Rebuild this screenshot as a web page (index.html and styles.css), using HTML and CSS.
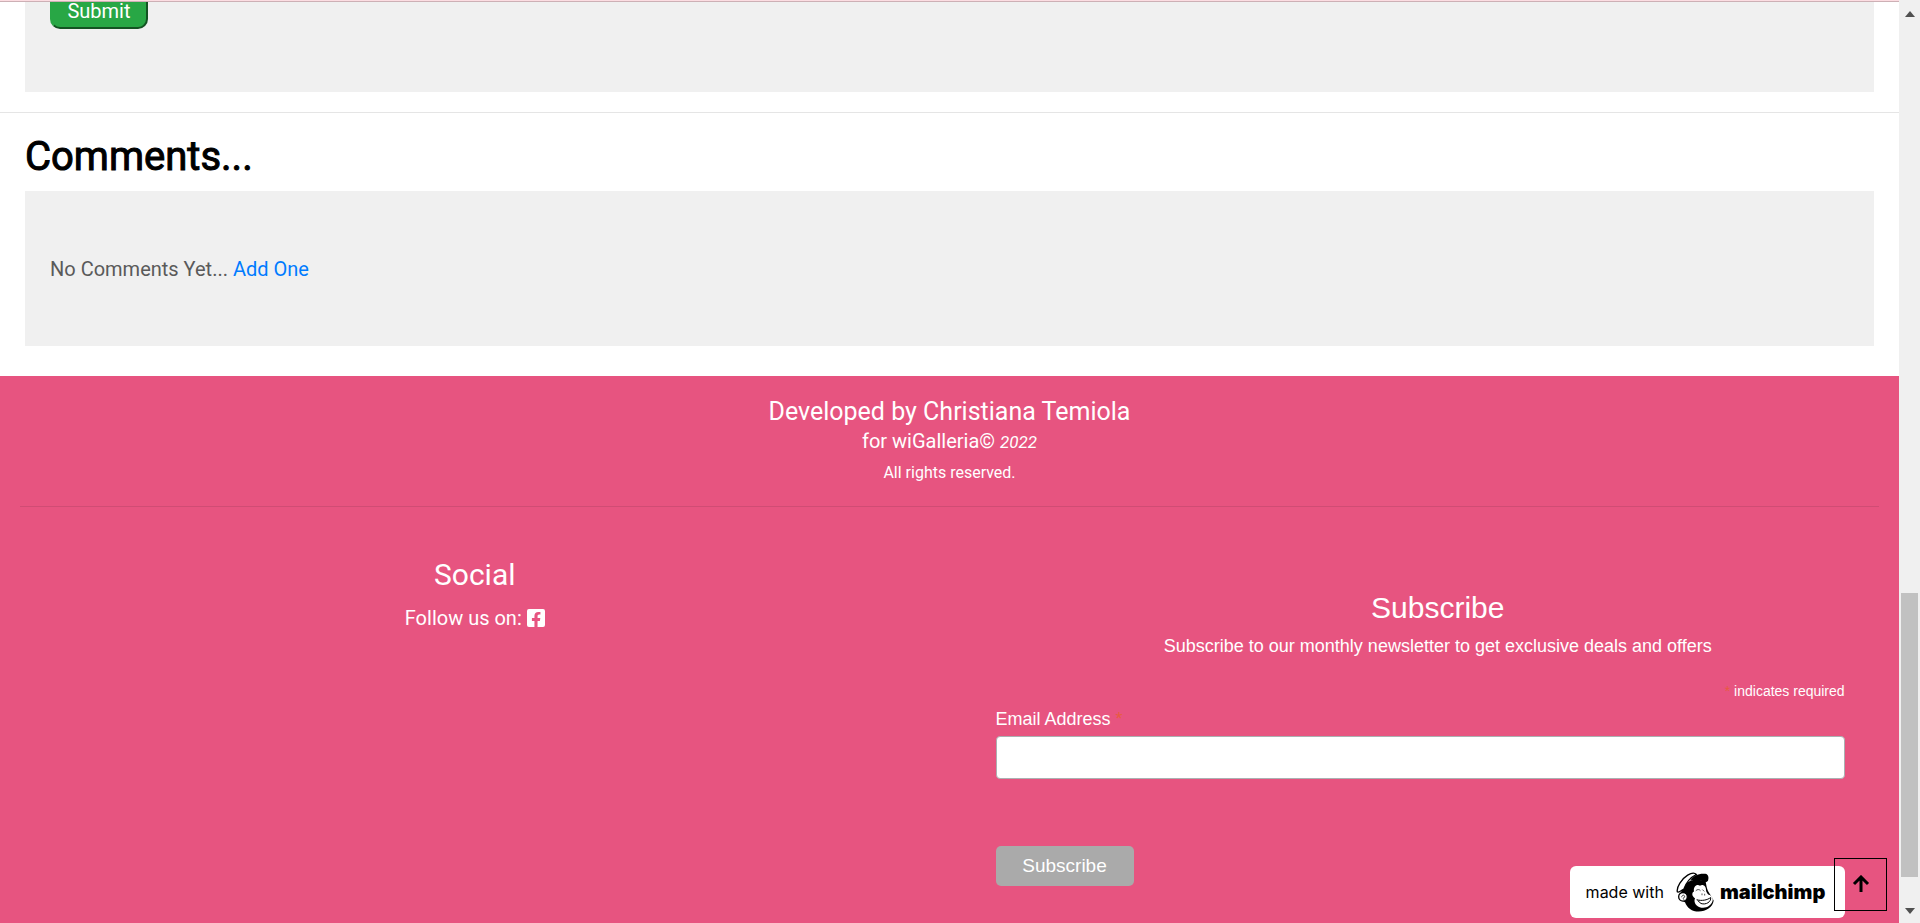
FILE: index.html
```html
<!DOCTYPE html>
<html lang="en">
<head>
<meta charset="utf-8">
<title>wiGalleria</title>
<link rel="stylesheet" href="styles.css">
</head>
<body>
<div class="page">
  <header class="topbar"></header>
  <main>
    <section class="panel panel-form">
      <button class="submit" type="submit">Submit</button>
    </section>
    <hr class="divider">
    <h1 class="title">Comments...</h1>
    <section class="panel panel-comments">
      <p>No Comments Yet... <a href="#add">Add One</a></p>
    </section>
  </main>
  <footer class="footer">
    <div class="credits">
      <p class="developer">Developed by Christiana Temiola</p>
      <p class="product">for wiGalleria© <em>2022</em></p>
      <p class="rights">All rights reserved.</p>
    </div>
    <hr class="footer-line">
    <div class="columns">
      <section class="social">
        <h2>Social</h2>
        <p>Follow us on: <a href="#facebook" aria-label="Facebook"><svg class="facebook" viewBox="0 0 448 448"><path fill="currentColor" d="M400 0H48A48 48 0 0 0 0 48v352a48 48 0 0 0 48 48h137.250V295.690h-63V224h63v-54.640c0-62.150 37-96.480 93.670-96.480 27.140 0 55.520 4.840 55.520 4.840v61h-31.270c-30.810 0-40.420 19.120-40.420 38.730V224h68.780l-11 71.690h-57.780V448H400a48 48 0 0 0 48-48V48a48 48 0 0 0-48-48z"/></svg></a></p>
      </section>
      <section class="newsletter">
        <div class="intro">
          <h2>Subscribe</h2>
          <p>Subscribe to our monthly newsletter to get exclusive deals and offers</p>
        </div>
        <form class="signup">
          <p class="required"><span class="star">*</span> indicates required</p>
          <label for="email">Email Address <span class="star">*</span></label>
          <input id="email" type="email">
          <div class="actions">
            <button class="subscribe" type="button">Subscribe</button>
            <a class="badge" href="#mailchimp">
              <span class="made">made with</span>
              <svg class="chimp" viewBox="0 0 114 119">
                <path d="M16 58C19 38 38 23 60 23L88 25C91 36 91 44 95 54C99 64 111 76 113 86C110 106 90 118 68 118C48 118 33 107 27 90C16 88 13 70 16 58Z"/>
                <path fill="#fff" d="M54 58C51 42 64 34 72 41C80 34 91 42 90 54C91 60 94 64 98 68C107 69 112 77 110 85C106 103 87 110 71 105C57 100 53 87 57 78C48 73 46 62 54 58Z"/>
                <path fill="#fff" stroke="#000" stroke-width="4" stroke-linejoin="round" d="M4 59C1 45 17 20 35 9C46 2 56 1 61 7C44 15 30 32 23 52C16 53 8 63 4 59Z"/>
                <path d="M43 26C50 10 70 3 88 5C98 7 99 17 96 26C92 31 87 31 82 27C68 22 55 23 43 26Z"/>
                <circle cx="21" cy="74" r="13" fill="#fff" stroke="#000" stroke-width="4"/>
                <path fill="none" stroke="#000" stroke-width="2" stroke-linecap="round" d="M17 74C18 66 28 68 26 75C22 75 20 79 23 82M60 55C64 51 70 51 73 55M80 53L84 57M78 65V68M86 66V69"/>
                <path fill="none" stroke="#000" stroke-width="3" stroke-linecap="round" d="M63 83C77 87 94 84 104 76C106 89 90 99 75 94L66 86"/>
              </svg>
              <span class="brand">mailchimp</span>
            </a>
          </div>
        </form>
      </section>
    </div>
  </footer>
  <button class="to-top" type="button" aria-label="Back to top">
    <svg viewBox="0 0 18 18"><path d="M9 17V2M2 9L9 2L16 9" fill="none" stroke="#000" stroke-width="3"/></svg>
  </button>
</div>
<div class="scrollbar" aria-hidden="true">
  <svg class="arrow" viewBox="0 0 10 6"><path d="M5 0L10 6H0Z"/></svg>
  <div class="track"><div class="thumb"></div></div>
  <svg class="arrow" viewBox="0 0 10 6"><path d="M0 0H10L5 6Z"/></svg>
</div>
</body>
</html>
```
FILE: styles.css
```css
* { box-sizing: border-box; }

body {
  margin: 0;
  display: flex;
  height: 100vh;
  overflow: hidden;
  background: #fff;
  font-family: Roboto, sans-serif;
  font-size: 20px;
  line-height: 30px;
  color: #5a5a5a;
}

h1, h2, p { margin: 0; font-weight: 400; }
a { color: #007bff; text-decoration: none; }
button { font-family: inherit; cursor: pointer; }

.page {
  flex: 1;
  display: flex;
  flex-direction: column;
  overflow: hidden;
}

.topbar {
  flex: none;
  height: 2px;
  background: #fcdde2;
  border-bottom: 1px solid #cdb0b5;
}

main {
  flex: none;
  overflow: hidden;
  padding-bottom: 30px;
}

.panel { margin: 0 25px; padding: 0 25px; background: #f0f0f0; }
.panel-form { padding-bottom: 63px; }
.panel-comments { padding-top: 63px; padding-bottom: 62px; }

.submit {
  display: block;
  margin-top: -10px;
  padding: 0 15px;
  min-width: 98px;
  height: 37px;
  border: 2px outset #28a745;
  border-radius: 10px;
  background: #28a745;
  color: #fff;
  font-size: 20px;
}

.divider {
  margin: 20px 0;
  border: 0;
  border-top: 1px solid #e5e5e5;
}

.title {
  margin: 0 25px;
  padding-bottom: 10px;
  font-size: 40px;
  line-height: 48px;
  color: #000;
  -webkit-text-stroke: 1px #000;
}

.footer {
  flex: 1 0 auto;
  background: #e75480;
  color: #fff;
}

.footer a { color: #fff; }

.credits { padding-top: 20px; text-align: center; }
.developer { font-size: 25px; line-height: 32px; }
.product { font-size: 20px; line-height: 26px; }
.product em { font-size: 17px; }
.rights { padding-top: 2px; font-size: 16px; line-height: 32px; }

.footer-line {
  margin: 17px 20px 48px;
  border: 0;
  border-top: 1px solid #d04c74;
}

.columns { display: flex; }
.columns > section { flex: 0 0 50%; }
.columns h2 { font-size: 30px; line-height: 40px; }

.social { text-align: center; }
.social p { margin-top: 8px; }
.facebook { width: 18px; height: 18px; vertical-align: -2px; }

.newsletter {
  padding: 33px 19px 0 46px;
  font-family: "Liberation Sans", Arial, sans-serif;
}

.intro { text-align: center; }
.intro p { font-size: 18px; line-height: 36px; }

.signup { width: 96%; padding-top: 12px; font-size: 18px; }
.required { font-size: 14px; line-height: 30px; text-align: right; }
.signup label { display: block; padding-bottom: 4px; line-height: 26px; }
.star { color: #e85c41; }

.signup input {
  display: block;
  width: 100%;
  height: 43px;
  padding: 8px;
  border: 1px solid #abb0b2;
  border-radius: 4px;
  background: #fff;
  font-size: 18px;
}

.actions {
  display: flex;
  justify-content: space-between;
  height: 72px;
  margin-top: 67px;
}

.subscribe {
  width: 138px;
  height: 40px;
  border: 0;
  border-radius: 5px;
  background: #aaa;
  color: #fff;
  font-size: 19px;
}

.footer .badge {
  align-self: flex-end;
  display: flex;
  align-items: center;
  width: 275px;
  height: 52px;
  padding: 0 16px;
  border-radius: 6px;
  background: #fff;
  color: #000;
  font-family: Inter, sans-serif;
}

.made { font-size: 16px; white-space: nowrap; }
.chimp { flex: none; width: 38px; height: 40px; margin: 0 6px 0 12px; }
.brand { font-size: 20px; font-weight: 900; }

.to-top {
  position: fixed;
  right: 33px;
  bottom: 12px;
  width: 53px;
  height: 53px;
  padding: 0;
  border: 1px solid #000;
  background: transparent;
}

.to-top svg { display: block; width: 18px; height: 18px; margin: 0 auto 2px; }

.scrollbar {
  flex: none;
  display: flex;
  flex-direction: column;
  align-items: center;
  width: 21px;
  padding: 11px 0 9px;
  background: #f0f0f0;
}

.arrow { flex: none; width: 10px; height: 6px; fill: #505050; }

.track {
  flex: 1;
  display: flex;
  flex-direction: column;
  justify-content: flex-end;
  width: 17px;
  padding-bottom: 31px;
}

.thumb { height: 33%; min-height: 284px; background: #c1c1c1; }
```
